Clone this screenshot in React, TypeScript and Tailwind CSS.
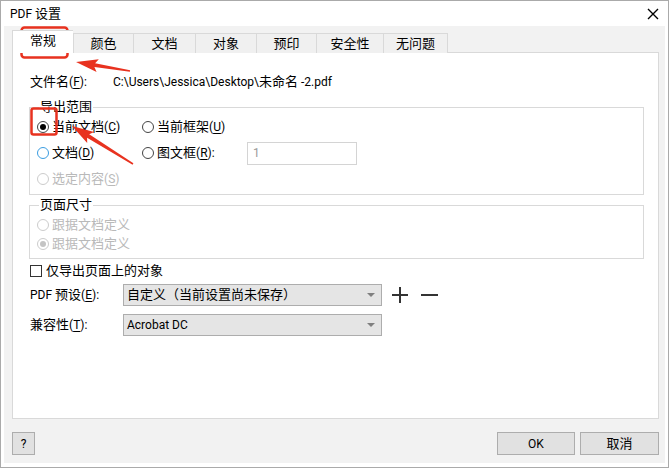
import React from "react";

const tabs = [
  { label: "常规", w: "w-[61px]", active: true },
  { label: "颜色", w: "w-[60px]" },
  { label: "文档", w: "w-[62px]" },
  { label: "对象", w: "w-[61px]" },
  { label: "预印", w: "w-[60px]" },
  { label: "安全性", w: "w-[67px]" },
  { label: "无问题", w: "w-[65px]" },
];

function T({ s }: { s: string }) {
  const parts = s.split(/([\u3000-\u9fff\uff00-\uffef]+)/).filter(Boolean);
  return (
    <>
      {parts.map((p, i) =>
        /[\u3000-\u9fff\uff00-\uffef]/.test(p) ? (
          <span key={i} className="text-[13px]">
            {p}
          </span>
        ) : (
          <span key={i}>{p}</span>
        )
      )}
    </>
  );
}

function Key({ text, k, tail = "" }: { text: string; k: string; tail?: string }) {
  return (
    <span>
      <T s={text} />(<span className="underline underline-offset-2">{k}</span>){tail}
    </span>
  );
}

function Radio({
  label,
  k,
  tail,
  checked,
  disabled,
  focus,
}: {
  label: string;
  k?: string;
  tail?: string;
  checked?: boolean;
  disabled?: boolean;
  focus?: boolean;
}) {
  const ring = disabled ? "border-[#cccccc]" : focus ? "border-[#3b9de1]" : "border-[#444444]";
  return (
    <span className="flex items-center gap-[3px]">
      <span className={`w-[12px] h-[12px] rounded-full border bg-white flex items-center justify-center ${ring}`}>
        {checked && <span className={`w-[6px] h-[6px] rounded-full ${disabled ? "bg-[#c4c4c4]" : "bg-black"}`} />}
      </span>
      <span className={disabled ? "text-[#b9b9b9]" : "text-black"}>
        {k ? <Key text={label} k={k} tail={tail} /> : <T s={label} />}
      </span>
    </span>
  );
}

function Select({ value }: { value: string }) {
  return (
    <div className="w-[259px] h-[22px] bg-[#e5e5e5] border border-[#adadad] flex items-center pl-[3px] pr-[6px]">
      <span className="flex-1">
        <T s={value} />
      </span>
      <svg width="8" height="5" viewBox="0 0 8 5">
        <path d="M0 0 L8 0 L4 4 Z" fill="#808080" />
      </svg>
    </div>
  );
}

function arrow(tx: number, ty: number, sx: number, sy: number) {
  const dx = tx - sx;
  const dy = ty - sy;
  const L = Math.hypot(dx, dy);
  const ux = dx / L;
  const uy = dy / L;
  const px = -uy;
  const py = ux;
  const head = 19;
  const bx = tx - ux * head;
  const by = ty - uy * head;
  const wx = tx - ux * (head + 3);
  const wy = ty - uy * (head + 3);
  const pts = [
    [sx + px * 0.8, sy + py * 0.8],
    [bx + px * 2, by + py * 2],
    [wx + px * 6.5, wy + py * 6.5],
    [tx, ty],
    [wx - px * 6.5, wy - py * 6.5],
    [bx - px * 2, by - py * 2],
    [sx - px * 0.8, sy - py * 0.8],
  ];
  return pts.map((p) => `${p[0].toFixed(1)},${p[1].toFixed(1)}`).join(" ");
}

export default function App() {
  return (
    <div className="relative w-[669px] h-[468px] border border-[#aaaaaa] bg-white flex flex-col text-[12px] leading-[16px] text-black font-['Roboto','Noto_Sans_CJK_SC',sans-serif]">
      {/* title bar */}
      <div className="h-[25px] flex items-center pl-[9px] pr-[9px]">
        <span className="flex-1 pt-[1px]">
          <T s="PDF 设置" />
        </span>
        <svg width="12" height="12" viewBox="0 0 12 12">
          <path d="M1 1 L11 11 M11 1 L1 11" stroke="#000" strokeWidth="1.4" />
        </svg>
      </div>

      {/* body */}
      <div className="flex-1 mx-[3px] mb-[4px] bg-[#f2f2f2] pl-[8px] pr-[6px] flex flex-col">
        {/* tabs */}
        <div className="relative z-10 flex items-end h-[27px] -mb-px">
          {tabs.map((t, i) => (
            <div
              key={t.label}
              className={`${t.w} flex items-center justify-center border-t border-l border-[#d9d9d9] ${
                i === tabs.length - 1 ? "border-r" : ""
              } ${t.active ? "h-[23px] bg-white pb-[2px]" : "h-[20px] bg-[#f0f0f0]"}`}
            >
              <T s={t.label} />
            </div>
          ))}
        </div>

        {/* panel */}
        <div className="h-[367px] bg-white border border-[#d9d9d9] pl-[16px] pr-[14px] pt-[21px] flex flex-col">
          <div className="flex h-[16px] pl-[1px]">
            <span className="w-[83px]">
              <Key text="文件名" k="F" tail=":" />
            </span>
            <span>
              <T s={"C:\\Users\\Jessica\\Desktop\\未命名 -2.pdf"} />
            </span>
          </div>

          {/* 导出范围 */}
          <div className="relative mt-[17px] border border-[#d9d9d9] pt-[6px] pb-[2px] pl-[7px]">
            <span className="absolute left-[9px] top-[-9px] bg-white px-[1px]">
              <T s="导出范围" />
            </span>
            <div className="flex items-center h-[26px]">
              <span className="w-[105px]">
                <Radio label="当前文档" k="C" checked />
              </span>
              <Radio label="当前框架" k="U" />
            </div>
            <div className="flex items-center h-[26px]">
              <span className="w-[105px]">
                <Radio label="文档" k="D" focus />
              </span>
              <span className="w-[105px]">
                <Radio label="图文框" k="R" tail=":" />
              </span>
              <div className="w-[110px] h-[23px] border border-[#d4d4d4] bg-white flex items-center pl-[5px] text-[#9a9a9a]">
                1
              </div>
            </div>
            <div className="flex items-center h-[26px]">
              <Radio label="选定内容" k="S" disabled />
            </div>
          </div>

          {/* 页面尺寸 */}
          <div className="relative mt-[10px] border border-[#d9d9d9] pt-[9px] pb-[5px] pl-[7px]">
            <span className="absolute left-[9px] top-[-9px] bg-white px-[1px]">
              <T s="页面尺寸" />
            </span>
            <div className="flex items-center h-[19px]">
              <Radio label="跟据文档定义" disabled />
            </div>
            <div className="flex items-center h-[19px]">
              <Radio label="跟据文档定义" checked disabled />
            </div>
          </div>

          <div className="mt-[4px] flex items-center h-[16px] gap-[4px] pl-[1px]">
            <span className="w-[12px] h-[12px] border border-[#333333] bg-white" />
            <T s="仅导出页面上的对象" />
          </div>

          <div className="mt-[5px] flex items-center pl-[1px]">
            <span className="w-[93px]">
              <Key text="PDF 预设" k="E" tail=":" />
            </span>
            <Select value="自定义（当前设置尚未保存）" />
            <svg className="ml-[10px]" width="16" height="16" viewBox="0 0 16 16">
              <path d="M8 0 V16 M0 8 H16" stroke="#333" strokeWidth="2" />
            </svg>
            <svg className="ml-[13px]" width="17" height="16" viewBox="0 0 17 16">
              <path d="M0 8 H17" stroke="#333" strokeWidth="2" />
            </svg>
          </div>

          <div className="mt-[8px] flex items-center pl-[1px]">
            <span className="w-[93px]">
              <Key text="兼容性" k="T" tail=":" />
            </span>
            <Select value="Acrobat DC" />
          </div>
        </div>

        {/* buttons */}
        <div className="mt-[13px] flex items-center">
          <button className="w-[23px] h-[23px] bg-[#e1e1e1] border border-[#adadad] text-[12px]">?</button>
          <div className="flex-1" />
          <button className="w-[78px] h-[23px] bg-[#e1e1e1] border border-[#adadad]">OK</button>
          <button className="ml-[5px] w-[79px] h-[23px] bg-[#e1e1e1] border border-[#adadad]">
            <T s="取消" />
          </button>
        </div>
      </div>

      {/* annotations */}
      <svg className="absolute left-[-1px] top-[-1px] pointer-events-none" width="669" height="468" viewBox="0 0 669 468">
        <rect x="21.5" y="27.5" width="46" height="30" rx="3" fill="none" stroke="#e8321f" strokeWidth="2.5" />
        <rect x="31.5" y="108.5" width="25" height="26" rx="2" fill="none" stroke="#e8321f" strokeWidth="2.5" />
        <polygon points={arrow(76, 62, 130, 71)} fill="#e8321f" />
        <polygon points={arrow(72, 126, 133, 164)} fill="#e8321f" />
      </svg>
    </div>
  );
}
